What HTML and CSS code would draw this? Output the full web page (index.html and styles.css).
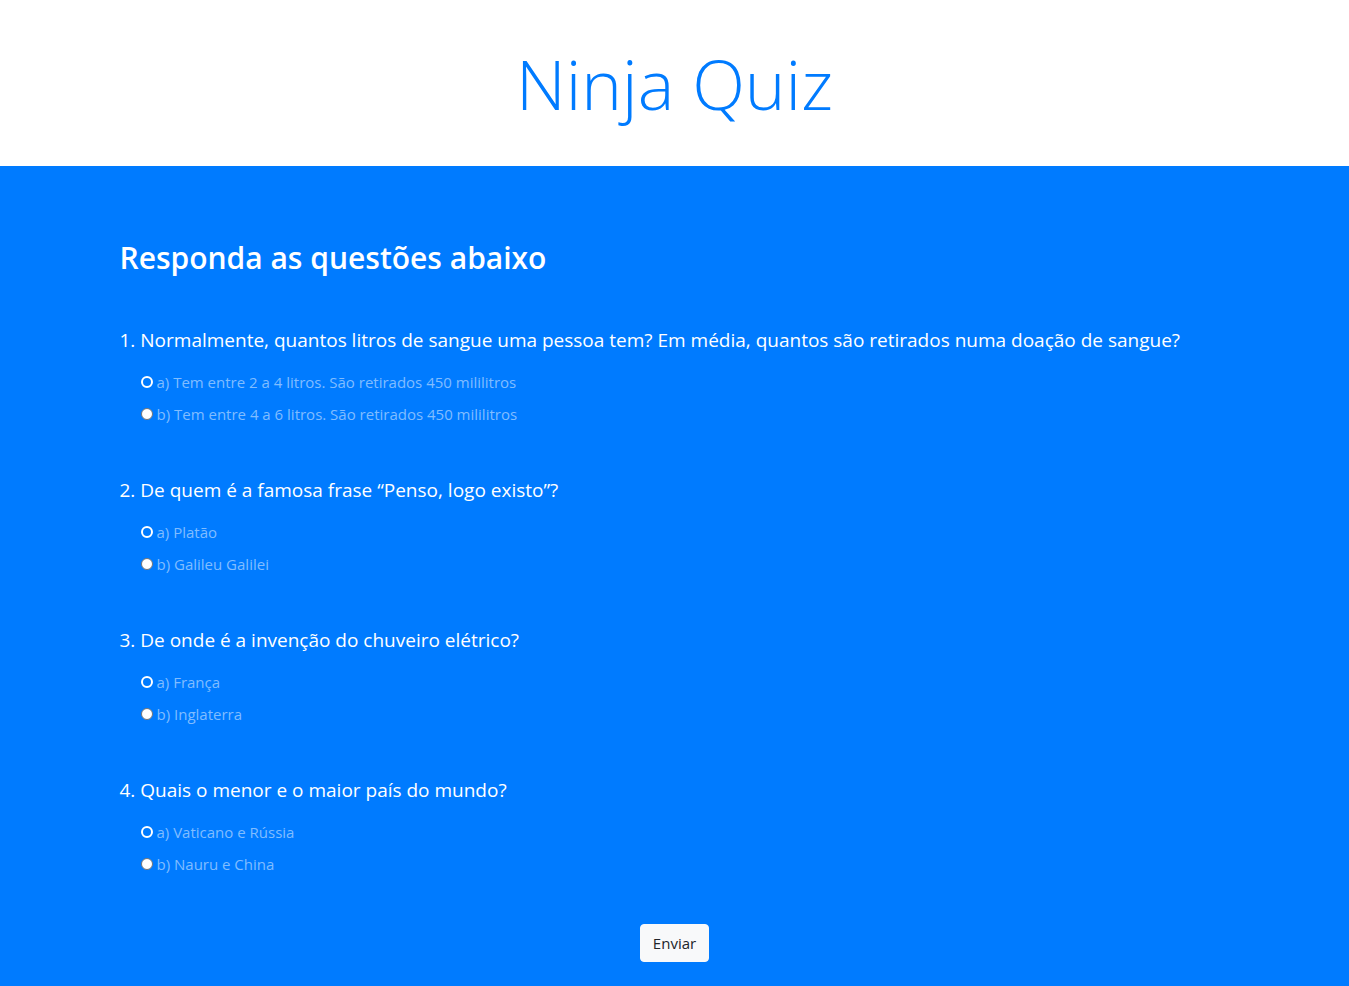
FILE: index.html
```html
<!DOCTYPE html>
<html lang="pt-BR">
<head>
<meta charset="utf-8">
<title>Ninja Quiz</title>
<link rel="stylesheet" href="styles.css">
</head>
<body>
<header class="site-header">
  <h1 class="title">Ninja Quiz</h1>
</header>
<main class="quiz">
  <div class="container">
    <h2 class="quiz-heading">Responda as questões abaixo</h2>
    <form class="quiz-form">
      <div class="question">
        <p class="question-text">1. Normalmente, quantos litros de sangue uma pessoa tem? Em média, quantos são retirados numa doação de sangue?</p>
        <label class="option"><span class="radio radio-a"></span>a) Tem entre 2 a 4 litros. São retirados 450 mililitros</label>
        <label class="option"><span class="radio radio-b"></span>b) Tem entre 4 a 6 litros. São retirados 450 mililitros</label>
      </div>
      <div class="question">
        <p class="question-text">2. De quem é a famosa frase “Penso, logo existo”?</p>
        <label class="option"><span class="radio radio-a"></span>a) Platão</label>
        <label class="option"><span class="radio radio-b"></span>b) Galileu Galilei</label>
      </div>
      <div class="question">
        <p class="question-text">3. De onde é a invenção do chuveiro elétrico?</p>
        <label class="option"><span class="radio radio-a"></span>a) França</label>
        <label class="option"><span class="radio radio-b"></span>b) Inglaterra</label>
      </div>
      <div class="question">
        <p class="question-text">4. Quais o menor e o maior país do mundo?</p>
        <label class="option"><span class="radio radio-a"></span>a) Vaticano e Rússia</label>
        <label class="option"><span class="radio radio-b"></span>b) Nauru e China</label>
      </div>
      <div class="actions">
        <button type="button" class="btn">Enviar</button>
      </div>
    </form>
  </div>
</main>
</body>
</html>
```
FILE: styles.css
```css
html, body {
  margin: 0;
  padding: 0;
}
body {
  font-family: "Open Sans", "Noto Sans", sans-serif;
  color: #212529;
  background: #fff;
  height: 986px;
  overflow: hidden;
}
.site-header {
  height: 166px;
  display: flex;
  align-items: center;
  justify-content: center;
}
.title {
  margin: 0;
  font-size: 69px;
  font-weight: 300;
  line-height: 1.2;
  color: #007bff;
}
.quiz {
  background: #007bff;
  height: 820px;
}
.container {
  max-width: 1110px;
  margin: 0 auto;
  padding: 0 15px;
}
.quiz-heading {
  margin: 0;
  padding-top: 73px;
  font-size: 30px;
  font-weight: 600;
  line-height: 38px;
  color: #fff;
}
.quiz-form {
  padding-top: 51px;
  display: flex;
  flex-direction: column;
  gap: 48px;
}
.question {
  display: flex;
  flex-direction: column;
}
.question-text {
  margin: 0 0 14px;
  font-size: 19px;
  line-height: 24px;
  color: #fff;
}
.option {
  display: flex;
  align-items: center;
  gap: 4px;
  padding-left: 21px;
  height: 32px;
  font-size: 15px;
  color: #80bdff;
}
.radio {
  width: 12px;
  height: 12px;
  box-sizing: border-box;
  border-radius: 50%;
  flex: none;
}
.radio-a {
  border: 2px solid #fff;
  background: transparent;
}
.radio-b {
  border: 1px solid #767676;
  background: #fff;
}
.actions {
  display: flex;
  justify-content: center;
  margin-top: -4px;
}
.btn {
  font-family: inherit;
  font-size: 15px;
  line-height: 24px;
  padding: 6px 12px;
  color: #212529;
  background: #f8f9fa;
  border: 1px solid #f8f9fa;
  border-radius: 4px;
}
```
